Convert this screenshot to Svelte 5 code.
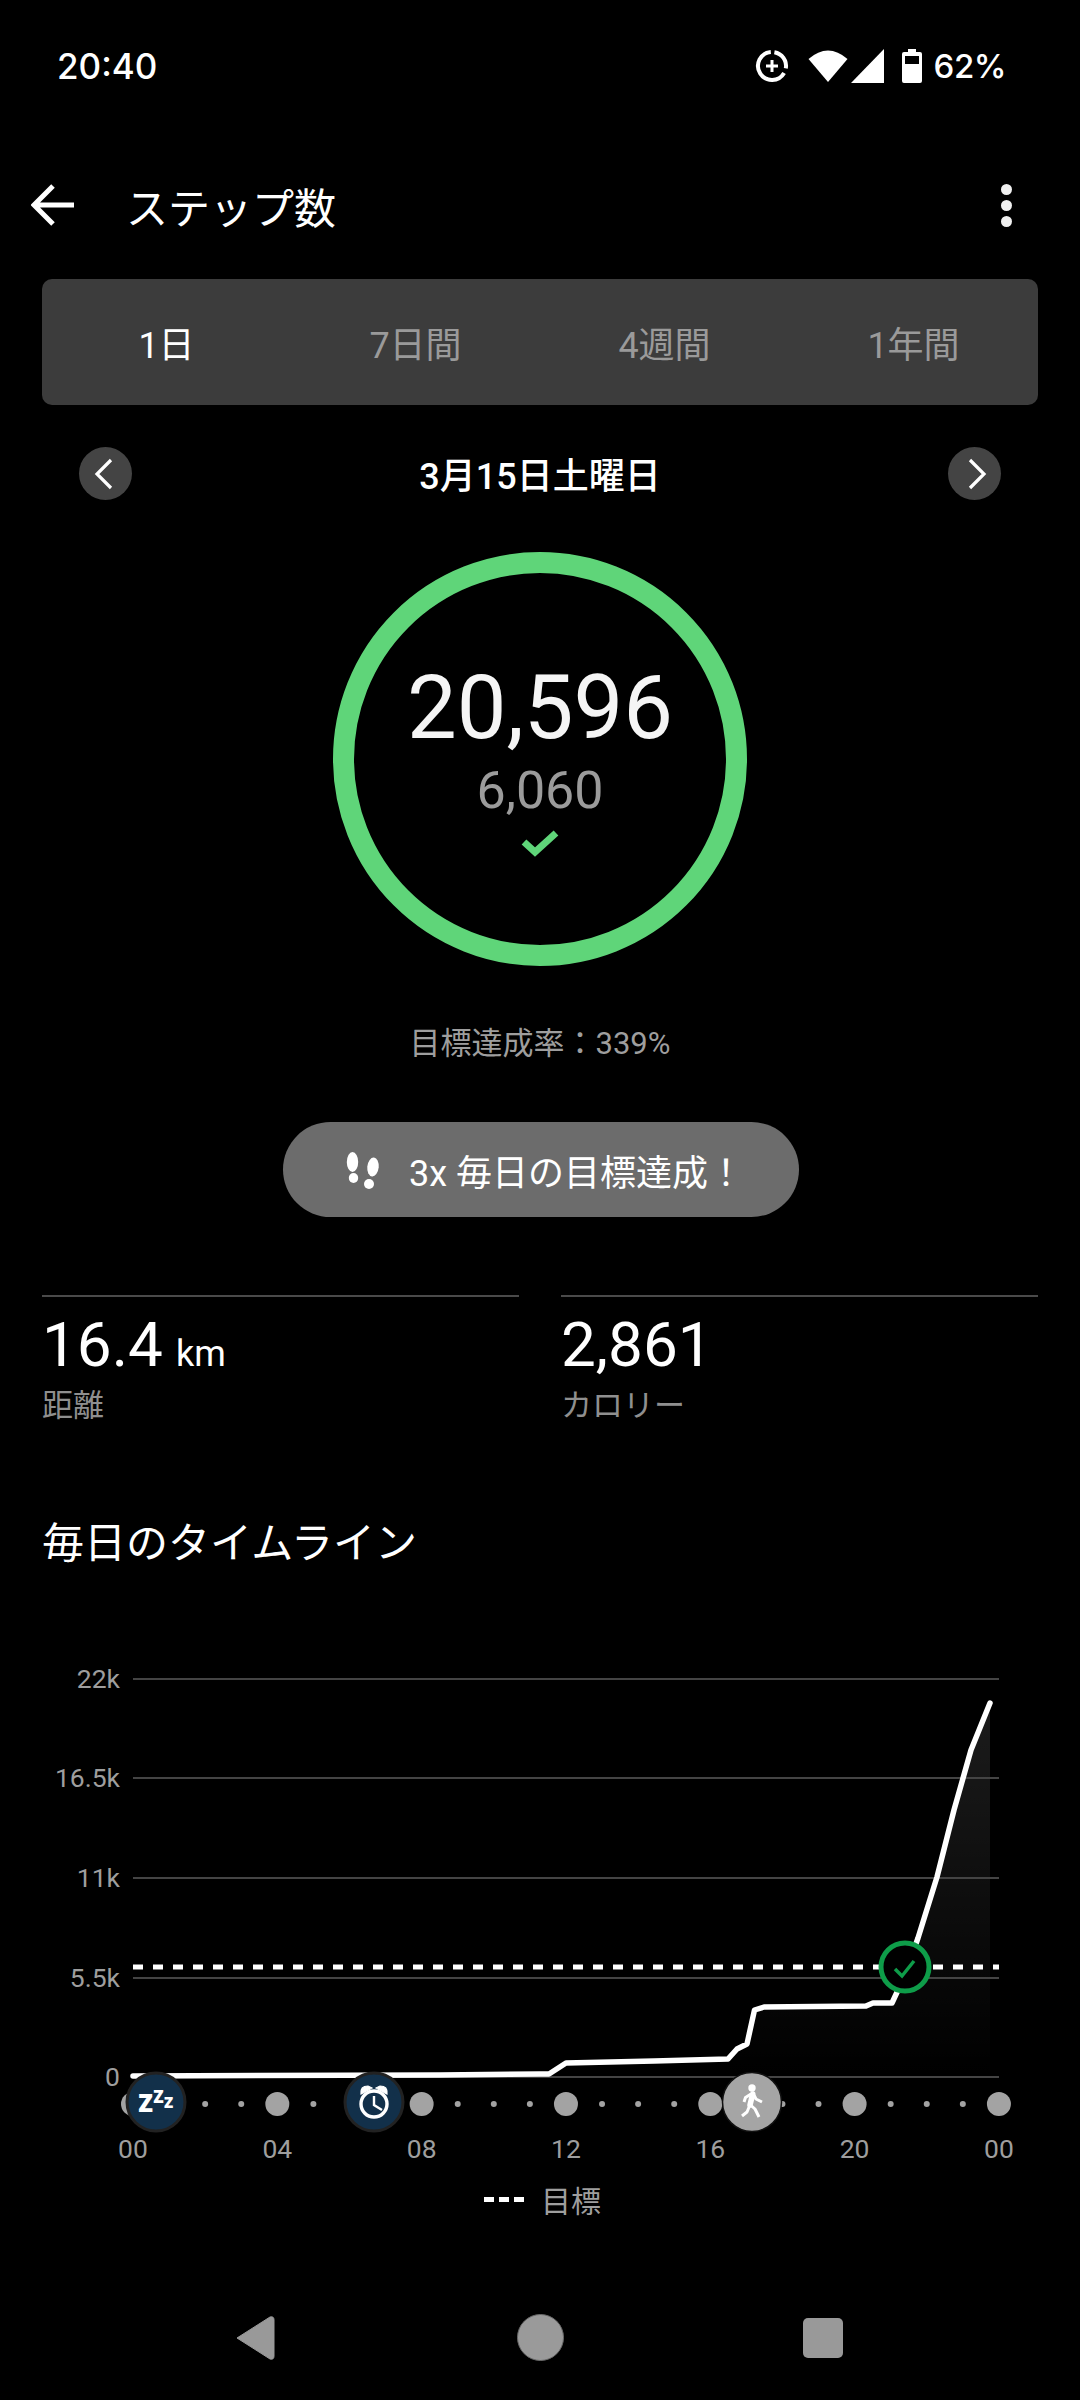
<script lang="ts">
  // chart lives on a free canvas, coordinates are page pixels
  const gridLines = [
    { y: 1679, label: '22k' },
    { y: 1778, label: '16.5k' },
    { y: 1878, label: '11k' },
    { y: 1978, label: '5.5k' },
    { y: 2077, label: '0' }
  ];

  const steps: [number, number][] = [
    [133, 2076], [440, 2075], [540, 2074], [549, 2074], [566, 2063], [654, 2061], [728, 2059],
    [737, 2049], [747, 2044], [754.5, 2010], [764, 2007], [866, 2006], [873, 2003], [892, 2003],
    [905, 1975], [918, 1938], [937, 1877], [954, 1810], [971, 1750], [990, 1703]
  ];
  const linePts = steps.map((p) => p.join(',')).join(' ');
  const areaPts = `${linePts} 990,2077 133,2077`;

  const hourX = (h: number) => 133 + h * 36.08;
  const hours = Array.from({ length: 25 }, (_, h) => h);
  const ticks = [
    { h: 0, label: '00' }, { h: 4, label: '04' }, { h: 8, label: '08' },
    { h: 12, label: '12' }, { h: 16, label: '16' }, { h: 20, label: '20' }, { h: 24, label: '00' }
  ];

  const tabs = ['1日', '7日間', '4週間', '1年間'];
</script>

<div class="page">
  <div class="status">
    <span class="time">20:40</span>
    <div class="status-right">
      <svg class="sys" width="36" height="36" viewBox="0 0 36 36">
        <path d="M16.8 4 A14 14 0 1 0 30.1 25" fill="none" stroke="#fff" stroke-width="4" />
        <path d="M20.4 4.2 A14 14 0 0 1 31.8 20.4" fill="none" stroke="#fff" stroke-width="4" />
        <path d="M18 12v12M12 18h12" stroke="#fff" stroke-width="3" />
      </svg>
      <svg class="wifi" width="40" height="34" viewBox="0 0 40 34"><path d="M0.5 10 Q20 -7 39.5 10 L20 33 Z" fill="#fff" /></svg>
      <svg class="signal" width="33" height="34" viewBox="0 0 33 34"><path d="M33 0 V34 H0 Z" fill="#fff" /></svg>
      <svg class="battery" width="20" height="34" viewBox="0 0 20 34">
        <path fill-rule="evenodd" d="M6 0h8v3h4a2 2 0 0 1 2 2v27a2 2 0 0 1-2 2H2a2 2 0 0 1-2-2V5a2 2 0 0 1 2-2h4zM3 7v8h14V7z" fill="#fff" />
      </svg>
      <span class="pct">62%</span>
    </div>
  </div>

  <div class="appbar">
    <svg class="back" width="44" height="42" viewBox="0 0 44 42">
      <path d="M22 2 L3 21 L22 40 M3 21 H43" fill="none" stroke="#fff" stroke-width="5" />
    </svg>
    <span class="title">ステップ数</span>
    <div class="more"><i></i><i></i><i></i></div>
  </div>

  <div class="tabs">
    {#each tabs as tab, i}
      <div class="tab" class:active={i === 0}>{tab}</div>
    {/each}
  </div>

  <div class="date-row">
    <div class="round">
      <svg class="prev" width="20" height="32" viewBox="0 0 20 32"><path d="M17 2 L3 16 L17 30" fill="none" stroke="#fff" stroke-width="3.2" /></svg>
    </div>
    <span class="date">3月15日土曜日</span>
    <div class="round">
      <svg class="next" width="20" height="32" viewBox="0 0 20 32"><path d="M3 2 L17 16 L3 30" fill="none" stroke="#fff" stroke-width="3.2" /></svg>
    </div>
  </div>

  <div class="ring">
    <div class="count">20,596</div>
    <div class="goal">6,060</div>
    <svg class="check" width="38" height="28" viewBox="0 0 38 28">
      <path d="M3 13 L14 23 L35 4" fill="none" stroke="#5fd579" stroke-width="7" />
    </svg>
  </div>

  <div class="rate">目標達成率：339%</div>

  <div class="pill">
    <svg width="36" height="44" viewBox="0 0 36 44">
      <ellipse cx="7.5" cy="14" rx="5.7" ry="10" fill="#fff" />
      <ellipse cx="8.5" cy="30" rx="4.7" ry="5" fill="#fff" />
      <ellipse cx="28" cy="19" rx="5.7" ry="9.5" fill="#fff" transform="rotate(6 28 19)" />
      <ellipse cx="24" cy="36" rx="5" ry="5" fill="#fff" />
    </svg>
    <span>3x 毎日の目標達成！</span>
  </div>

  <div class="stats">
    <div class="stat">
      <div class="value">16.4<small>km</small></div>
      <div class="caption">距離</div>
    </div>
    <div class="stat">
      <div class="value">2,861</div>
      <div class="caption">カロリー</div>
    </div>
  </div>

  <h2 class="section">毎日のタイムライン</h2>

  <svg class="chart" width="1080" height="520" viewBox="0 1660 1080 520" role="img" aria-label="毎日のタイムライン">
    <defs>
      <linearGradient id="fade" x1="0" y1="0" x2="0" y2="1">
        <stop offset="0" stop-color="#fff" stop-opacity="0.11" />
        <stop offset="1" stop-color="#fff" stop-opacity="0" />
      </linearGradient>
    </defs>

    <polygon points={areaPts} fill="url(#fade)" />

    {#each gridLines as g}
      <line x1="133" x2="999" y1={g.y} y2={g.y} stroke="#444" stroke-width="2" />
      <text x="120" y={g.y + 9} text-anchor="end" class="axis">{g.label}</text>
    {/each}

    <line x1="133" x2="999" y1="1967" y2="1967" stroke="#fff" stroke-width="5" stroke-dasharray="10 10" />
    <polyline points={linePts} fill="none" stroke="#fff" stroke-width="5.5" stroke-linejoin="round" stroke-linecap="round" />

    <!-- goal reached marker -->
    <circle cx="905" cy="1967" r="24" fill="#000" stroke="#0e9c49" stroke-width="5" />
    <path d="M895 1969 L902 1976 L914 1961" fill="none" stroke="#0e9c49" stroke-width="3.5" />

    <!-- hour dots -->
    {#each hours as h}
      <circle cx={hourX(h)} cy="2104" r={h % 4 === 0 ? 12 : 3} fill="#a3a3a3" />
    {/each}
    {#each ticks as t}
      <text x={hourX(t.h)} y="2158" text-anchor="middle" class="axis">{t.label}</text>
    {/each}

    <!-- sleep -->
    <circle cx="156" cy="2102" r="29" fill="#12304a" stroke="#222" stroke-width="3" />
    <text x="145.5" y="2112" text-anchor="middle" class="zzz" font-size="24">Z</text>
    <text x="158.5" y="2103" text-anchor="middle" class="zzz" font-size="17">Z</text>
    <text x="168.5" y="2108" text-anchor="middle" class="zzz" font-size="15">Z</text>

    <!-- alarm -->
    <circle cx="374" cy="2102" r="29" fill="#12304a" stroke="#222" stroke-width="3" />
    <circle cx="374" cy="2104" r="13" fill="none" stroke="#fff" stroke-width="3.4" />
    <path d="M374 2096 V2105 L382 2110" fill="none" stroke="#fff" stroke-width="2.4" />
    <path d="M361 2094 Q360 2086 368 2086 L372 2088 Z M387 2094 Q388 2086 380 2086 L376 2088 Z" fill="#fff" stroke="#fff" stroke-width="1.2" />

    <!-- walking -->
    <circle cx="752" cy="2102" r="29.5" fill="#a5a5a5" stroke="#111" stroke-width="1.5" />
    <circle cx="752" cy="2088" r="3.7" fill="#fff" />
    <path d="M752.7 2094 L750 2105" fill="none" stroke="#fff" stroke-width="5.5" stroke-linecap="round" />
    <path d="M751 2094 L745.5 2097.5 L744 2102 M754 2095 L756 2099 L762 2102 M749.5 2106 L747 2112 L742 2116 M750.5 2105 L755 2109 L759 2117" fill="none" stroke="#fff" stroke-width="3" stroke-linejoin="round" />
  </svg>

  <div class="legend">
    <span class="dashes"><i></i><i></i><i></i></span>
    <span>目標</span>
  </div>

  <div class="nav">
    <svg width="42" height="46" viewBox="0 0 42 46"><path d="M4 23 L37 2 Q41 1 41 5 V41 Q41 45 37 44 Z" fill="#999" stroke="#999" stroke-linejoin="round" /></svg>
    <div class="home"></div>
    <div class="recents"></div>
  </div>
</div>

<style>
  :global(body) {
    margin: 0;
    background: #000;
  }

  .page {
    width: 1080px;
    height: 2400px;
    overflow: hidden;
    background: #000;
    color: #fff;
    font-family: Roboto, "Noto Sans CJK JP", sans-serif;
    display: flex;
    flex-direction: column;
  }

  .status {
    height: 132px;
    flex: none;
    display: flex;
    align-items: center;
    justify-content: space-between;
    padding: 0 74px 0 57px;
    font-family: Inter, sans-serif;
    font-size: 35px;
    font-weight: 500;
  }

  .status-right {
    display: flex;
    align-items: center;
  }

  .sys { margin-right: 18px; }
  .wifi { margin-right: 3px; }
  .signal { margin-right: 18px; }
  .battery { margin-right: 12px; }

  .pct {
    font-size: 33px;
    letter-spacing: -0.5px;
  }

  .appbar {
    height: 146px;
    flex: none;
    display: flex;
    align-items: center;
    padding: 0 68px 0 31px;
  }

  .title {
    margin-left: 51px;
    font-size: 42px;
    flex: 1;
  }

  .more {
    display: flex;
    flex-direction: column;
    gap: 5px;
  }

  .more i {
    width: 11px;
    height: 11px;
    border-radius: 50%;
    background: #f0f0f0;
  }

  .tabs {
    height: 126px;
    flex: none;
    margin: 1px 42px 0;
    border-radius: 10px;
    background: #3c3c3c;
    display: grid;
    grid-template-columns: repeat(4, 1fr);
  }

  .tab {
    display: flex;
    align-items: center;
    justify-content: center;
    font-size: 36px;
    color: #9a9a9a;
  }

  .tab.active { color: #fff; }

  .date-row {
    margin: 42px 79px 0;
    height: 53px;
    flex: none;
    display: flex;
    align-items: center;
    justify-content: space-between;
  }

  .round {
    width: 53px;
    height: 53px;
    border-radius: 50%;
    background: #444;
    display: flex;
    align-items: center;
    justify-content: center;
  }

  .prev { margin-right: 4px; }
  .next { margin-left: 6px; }

  .date {
    font-size: 36px;
    font-weight: 500;
    padding-bottom: 2px;
  }

  .ring {
    box-sizing: border-box;
    width: 414px;
    height: 414px;
    flex: none;
    margin: 52px auto 0;
    border: 21px solid #5fd579;
    border-radius: 50%;
    display: flex;
    flex-direction: column;
    align-items: center;
    padding-top: 90px;
  }

  .count {
    font-size: 88.5px;
    line-height: 90px;
    color: #f5f5f5;
  }

  .goal {
    font-size: 52px;
    line-height: 60px;
    color: #9b9b9b;
    margin-top: 8px;
  }

  .check { margin-top: 8px; }

  .rate {
    margin-top: 58px;
    height: 40px;
    flex: none;
    line-height: 40px;
    text-align: center;
    font-size: 31px;
    color: #9e9e9e;
  }

  .pill {
    box-sizing: border-box;
    margin: 58px 0 0 283px;
    width: 516px;
    height: 95px;
    flex: none;
    border-radius: 48px;
    background: #6c6c6c;
    display: flex;
    align-items: center;
    padding-left: 62px;
    gap: 28px;
    font-size: 36px;
  }

  .stats {
    margin: 78px 42px 0;
    flex: none;
    display: grid;
    grid-template-columns: repeat(2, 1fr);
    gap: 42px;
  }

  .stat {
    border-top: 2px solid #4a4a4a;
    padding-top: 12px;
  }

  .value {
    font-size: 62px;
    line-height: 72px;
  }

  .value small {
    font-size: 36px;
    line-height: 1;
    margin-left: 13px;
  }

  .caption {
    font-size: 31px;
    line-height: 40px;
    margin-top: 5px;
    color: #8f8f8f;
  }

  .section {
    margin: 88px 42px 0;
    flex: none;
    font-size: 42px;
    line-height: 60px;
    font-weight: 400;
  }

  .chart {
    display: block;
    flex: none;
    margin-top: 86px;
  }

  .axis {
    font-size: 26.5px;
    fill: #9e9e9e;
  }

  .zzz {
    fill: #fff;
    font-family: "Open Sans", sans-serif;
    font-weight: 800;
  }

  .legend {
    height: 44px;
    flex: none;
    margin-top: -3px;
    display: flex;
    align-items: center;
    padding-left: 484px;
    gap: 17px;
    font-size: 30px;
    color: #9e9e9e;
  }

  .dashes {
    display: flex;
    gap: 5px;
  }

  .dashes i {
    width: 10px;
    height: 5px;
    background: #fff;
  }

  .nav {
    margin-top: 93px;
    height: 47px;
    flex: none;
    display: flex;
    align-items: center;
    padding-left: 233px;
  }

  .home {
    box-sizing: border-box;
    width: 47px;
    height: 47px;
    margin-left: 242px;
    border-radius: 50%;
    background: #9a9a9a;
    border: 1px solid #6a6a6a;
  }

  .recents {
    width: 40px;
    height: 40px;
    margin-left: 239px;
    border-radius: 5px;
    background: #999;
  }
</style>
